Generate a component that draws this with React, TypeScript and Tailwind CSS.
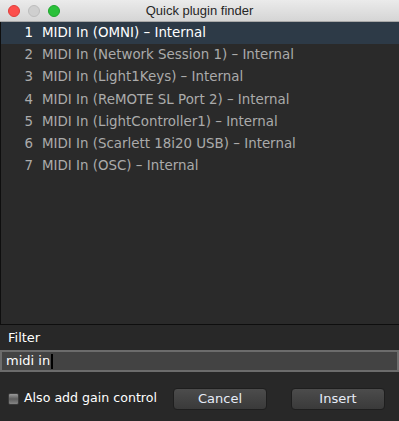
import React from "react";

const items = [
  "MIDI In (OMNI) – Internal",
  "MIDI In (Network Session 1) – Internal",
  "MIDI In (Light1Keys) – Internal",
  "MIDI In (ReMOTE SL Port 2) – Internal",
  "MIDI In (LightController1) – Internal",
  "MIDI In (Scarlett 18i20 USB) – Internal",
  "MIDI In (OSC) – Internal",
];

export default function App() {
  return (
    <div className="w-[399px] h-[421px] bg-[#282828] flex flex-col font-['DejaVu_Sans',sans-serif] overflow-hidden">
      <div className="h-[22px] shrink-0 flex items-center bg-gradient-to-b from-[#ebebeb] to-[#d5d5d5] border-b border-[#a8a8a8]">
        <div className="w-[66px] flex items-center gap-[8px] pl-[8px]">
          <span className="w-[12px] h-[12px] rounded-full bg-[#fc4f4c] border border-[#df3e3b]" />
          <span className="w-[12px] h-[12px] rounded-full bg-[#cfcfcf] border border-[#bdbdbd]" />
          <span className="w-[12px] h-[12px] rounded-full bg-[#2ac13a] border border-[#1ea52d]" />
        </div>
        <div className="flex-1 text-center text-[13px] text-[#262626] leading-none font-['Liberation_Sans',sans-serif]">Quick plugin finder</div>
        <div className="w-[66px]" />
      </div>
      <div className="h-[303px] shrink-0 bg-[#2a2a2a] border-l border-b border-[#0e0e0e] flex flex-col">
        {items.map((t, i) => (
          <div
            key={i}
            className={
              "h-[22.2px] flex items-center text-[13.4px] " +
              (i === 0 ? "bg-[#2d3a47] text-white" : "text-[#ababab]")
            }
          >
            <span className="w-[32px] text-right">{i + 1}</span>
            <span className="ml-[9px] whitespace-nowrap">{t}</span>
          </div>
        ))}
      </div>
      <div className="h-[25px] shrink-0 flex items-center pl-[8px] text-[13px] text-white">
        Filter
      </div>
      <div className="h-[22px] shrink-0 bg-[#434343] border-2 border-[#6c6c6c] flex items-center pl-[4px] text-[13px] text-white">
        <span>midi in</span>
        <span className="w-[2px] h-[15px] bg-black ml-[1px]" />
      </div>
      <div className="flex-1 flex items-center pl-[8px] pr-[14px] pt-[4px]">
        <span className="w-[11px] h-[12px] rounded-[2px] bg-gradient-to-b from-[#9a9a9a] via-[#5e5e5e] to-[#858585] border border-[#3a3a3a]" />
        <span className="ml-[5px] text-[12.6px] text-white whitespace-nowrap">Also add gain control</span>
        <div className="flex-1" />
        <button className="w-[94px] h-[22px] rounded-[4px] bg-gradient-to-b from-[#4c4c4c] to-[#3a3a3a] border border-[#1e1e1e] text-[13px] text-[#e6ecf7]">
          Cancel
        </button>
        <button className="ml-[24px] w-[94px] h-[22px] rounded-[4px] bg-gradient-to-b from-[#4c4c4c] to-[#3a3a3a] border border-[#1e1e1e] text-[13px] text-[#e6ecf7]">
          Insert
        </button>
      </div>
    </div>
  );
}
